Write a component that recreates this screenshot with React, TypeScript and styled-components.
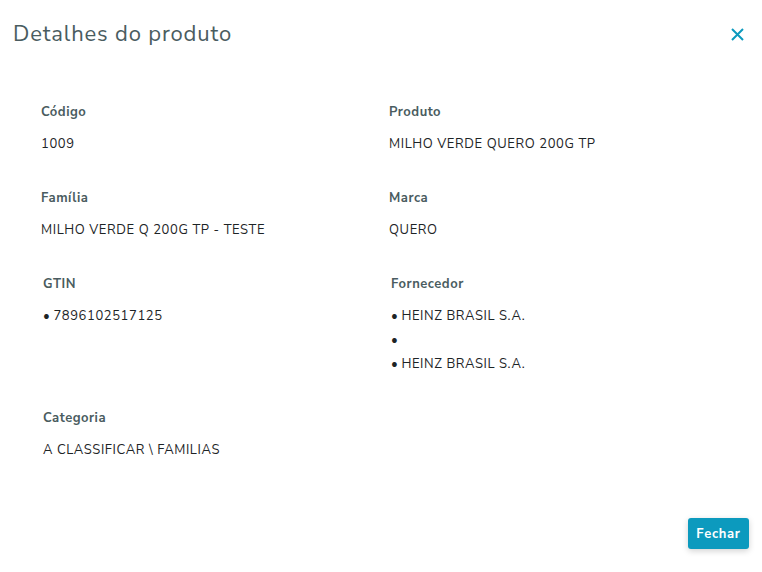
import React from 'react'
import styled, { createGlobalStyle } from 'styled-components'

type FieldProps = {
    label: string,
    value?: string,
    list?: string[],
    shift?: number
}

const GlobalStyle = createGlobalStyle`
html, body {
    margin: 0;
    padding: 0;
    background: #ffffff;
    font-family: "Nunito Sans", Lato, "Open Sans", sans-serif;
}
`

const Modal = styled.div`
height: 572px;
display: flex;
flex-direction: column;
background: #ffffff;
box-sizing: border-box;
`

const Header = styled.div`
display: flex;
align-items: center;
justify-content: space-between;
padding: 18px 18px 0 13px;
height: 32px;
`

const Title = styled.h1`
margin: 0;
font-size: 22px;
font-weight: 400;
letter-spacing: 0.85px;
color: #4a5c60;
line-height: 30px;
`

const CloseButton = styled.button`
border: 0;
background: transparent;
padding: 0;
width: 14px;
height: 14px;
display: flex;
align-items: center;
justify-content: center;
cursor: pointer;
`

const Body = styled.div`
display: grid;
grid-template-columns: 348px 1fr;
row-gap: 32px;
padding: 52px 20px 0 41px;
`

const FieldBox = styled.div<{ $shift: number }>`
display: flex;
flex-direction: column;
padding-left: ${(p) => p.$shift}px;
`

const Label = styled.span`
font-size: 13px;
font-weight: 700;
line-height: 20px;
letter-spacing: 0.5px;
color: #4a5c60;
margin-bottom: 10px;
`

const Value = styled.span`
font-size: 13px;
line-height: 24px;
letter-spacing: 0.6px;
color: #1d2426;
`

const List = styled.ul`
margin: 0;
padding: 0;
list-style: none;
`

const Item = styled.li`
font-size: 13px;
line-height: 24px;
letter-spacing: 0.6px;
color: #1d2426;
&::before {
    content: '•';
    margin-right: 3px;
}
`

const Footer = styled.div`
margin-top: auto;
display: flex;
justify-content: flex-end;
padding: 0 13px 23px 0;
`

const PrimaryButton = styled.button`
width: 61px;
height: 31px;
border: 0;
border-radius: 3px;
background: #0c9abe;
color: #ffffff;
font-family: inherit;
font-size: 13px;
font-weight: 700;
letter-spacing: 0.7px;
padding: 0;
box-shadow: 0 2px 6px rgba(0, 0, 0, 0.18);
cursor: pointer;
`

const Field = ({ label, value, list, shift = 0 }: FieldProps) => (
    <FieldBox $shift={shift}>
        <Label>{label}</Label>
        {list ? (
            <List>
                {list.map((item, index) => (
                    <Item key={index}>{item}</Item>
                ))}
            </List>
        ) : (
            <Value>{value}</Value>
        )}
    </FieldBox>
)

const App = () => {
    return (
        <Modal>
            <GlobalStyle />
            <Header>
                <Title>Detalhes do produto</Title>
                <CloseButton aria-label="Fechar">
                    <svg width="13" height="13" viewBox="0 0 13 13">
                        <path d="M1 1 L12 12 M12 1 L1 12" stroke="#0c9abe" strokeWidth="2" fill="none" />
                    </svg>
                </CloseButton>
            </Header>
            <Body>
                <Field label="Código" value="1009" />
                <Field label="Produto" value="MILHO VERDE QUERO 200G TP" />
                <Field label="Família" value="MILHO VERDE Q 200G TP - TESTE" />
                <Field label="Marca" value="QUERO" />
                <Field label="GTIN" list={['7896102517125']} shift={2} />
                <Field label="Fornecedor" list={['HEINZ BRASIL S.A.', '', 'HEINZ BRASIL S.A.']} shift={2} />
                <Field label="Categoria" value="A CLASSIFICAR \ FAMILIAS" shift={2} />
            </Body>
            <Footer>
                <PrimaryButton>Fechar</PrimaryButton>
            </Footer>
        </Modal>
    )
}

export default App
